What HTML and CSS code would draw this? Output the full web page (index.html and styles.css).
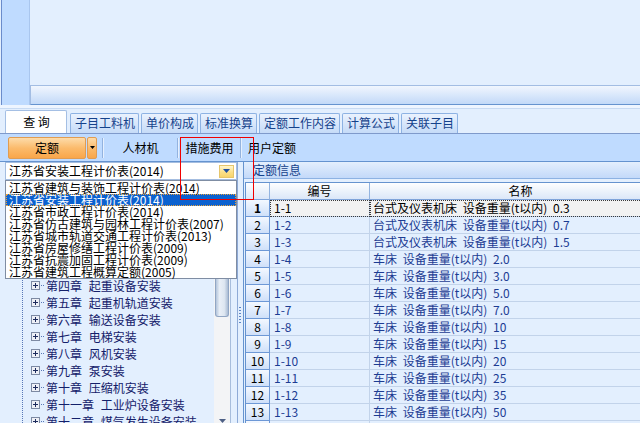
FILE: index.html
```html
<!DOCTYPE html>
<html lang="zh-CN">
<head>
<meta charset="utf-8">
<title>定额查询</title>
<link rel="stylesheet" href="styles.css">
</head>
<body>
<div class="app">
  <div class="top">
    <div class="strip"></div>
    <div class="top-main">
      <div class="canvas"></div>
      <div class="bar"></div>
    </div>
  </div>

  <div class="tabs">
    <div class="tab active">查 询</div>
    <div class="tab">子目工料机</div>
    <div class="tab">单价构成</div>
    <div class="tab">标准换算</div>
    <div class="tab">定额工作内容</div>
    <div class="tab">计算公式</div>
    <div class="tab">关联子目</div>
  </div>

  <div class="toolbar">
    <div class="split-btn">
      <div class="btn-main">定额</div>
      <div class="btn-arrow"><svg width="5" height="3" viewBox="0 0 5 3"><path d="M0 0h5L2.5 3z" fill="#000"/></svg></div>
    </div>
    <div class="sep"></div>
    <div class="tb-item w73">人材机</div>
    <div class="sep"></div>
    <div class="tb-item w61">措施费用</div>
    <div class="sep"></div>
    <div class="tb-item w60">用户定额</div>
  </div>

  <div class="main">
    <div class="left">
      <div class="combo">
        <span class="combo-text">江苏省安装工程计价表(2014)</span>
        <span class="combo-btn"><svg width="7" height="4" viewBox="0 0 7 4"><path d="M0 0h7L3.5 4z" fill="#1f4f9f"/></svg></span>
      </div>
      <div class="tree">
        <div class="tree-body">
          <div class="node l0"><span class="txt">江苏省安装工程计价表(2014)</span></div>
          <div class="node l1"><span class="txt">第一册 机械设备安装工程</span></div>
          <div class="node"><span class="exp"><svg width="9" height="9" viewBox="0 0 9 9"><rect x="0.5" y="0.5" width="8" height="8" fill="#eef0f6" stroke="#7d8aa3"/><path d="M2 4.5h5M4.5 2v5" stroke="#1d2b5c"/></svg></span><span class="conn"></span><span class="txt">第一章 切削设备安装</span></div>
          <div class="node"><span class="exp"><svg width="9" height="9" viewBox="0 0 9 9"><rect x="0.5" y="0.5" width="8" height="8" fill="#eef0f6" stroke="#7d8aa3"/><path d="M2 4.5h5M4.5 2v5" stroke="#1d2b5c"/></svg></span><span class="conn"></span><span class="txt">第二章 锻压设备安装</span></div>
          <div class="node"><span class="exp"><svg width="9" height="9" viewBox="0 0 9 9"><rect x="0.5" y="0.5" width="8" height="8" fill="#eef0f6" stroke="#7d8aa3"/><path d="M2 4.5h5M4.5 2v5" stroke="#1d2b5c"/></svg></span><span class="conn"></span><span class="txt">第三章 铸造设备安装</span></div>
          <div class="node"><span class="exp"><svg width="9" height="9" viewBox="0 0 9 9"><rect x="0.5" y="0.5" width="8" height="8" fill="#eef0f6" stroke="#7d8aa3"/><path d="M2 4.5h5M4.5 2v5" stroke="#1d2b5c"/></svg></span><span class="conn"></span><span class="txt">第四章 起重设备安装</span></div>
          <div class="node"><span class="exp"><svg width="9" height="9" viewBox="0 0 9 9"><rect x="0.5" y="0.5" width="8" height="8" fill="#eef0f6" stroke="#7d8aa3"/><path d="M2 4.5h5M4.5 2v5" stroke="#1d2b5c"/></svg></span><span class="conn"></span><span class="txt">第五章 起重机轨道安装</span></div>
          <div class="node"><span class="exp"><svg width="9" height="9" viewBox="0 0 9 9"><rect x="0.5" y="0.5" width="8" height="8" fill="#eef0f6" stroke="#7d8aa3"/><path d="M2 4.5h5M4.5 2v5" stroke="#1d2b5c"/></svg></span><span class="conn"></span><span class="txt">第六章 输送设备安装</span></div>
          <div class="node"><span class="exp"><svg width="9" height="9" viewBox="0 0 9 9"><rect x="0.5" y="0.5" width="8" height="8" fill="#eef0f6" stroke="#7d8aa3"/><path d="M2 4.5h5M4.5 2v5" stroke="#1d2b5c"/></svg></span><span class="conn"></span><span class="txt">第七章 电梯安装</span></div>
          <div class="node"><span class="exp"><svg width="9" height="9" viewBox="0 0 9 9"><rect x="0.5" y="0.5" width="8" height="8" fill="#eef0f6" stroke="#7d8aa3"/><path d="M2 4.5h5M4.5 2v5" stroke="#1d2b5c"/></svg></span><span class="conn"></span><span class="txt">第八章 风机安装</span></div>
          <div class="node"><span class="exp"><svg width="9" height="9" viewBox="0 0 9 9"><rect x="0.5" y="0.5" width="8" height="8" fill="#eef0f6" stroke="#7d8aa3"/><path d="M2 4.5h5M4.5 2v5" stroke="#1d2b5c"/></svg></span><span class="conn"></span><span class="txt">第九章 泵安装</span></div>
          <div class="node"><span class="exp"><svg width="9" height="9" viewBox="0 0 9 9"><rect x="0.5" y="0.5" width="8" height="8" fill="#eef0f6" stroke="#7d8aa3"/><path d="M2 4.5h5M4.5 2v5" stroke="#1d2b5c"/></svg></span><span class="conn"></span><span class="txt">第十章 压缩机安装</span></div>
          <div class="node"><span class="exp"><svg width="9" height="9" viewBox="0 0 9 9"><rect x="0.5" y="0.5" width="8" height="8" fill="#eef0f6" stroke="#7d8aa3"/><path d="M2 4.5h5M4.5 2v5" stroke="#1d2b5c"/></svg></span><span class="conn"></span><span class="txt">第十一章 工业炉设备安装</span></div>
          <div class="node"><span class="exp"><svg width="9" height="9" viewBox="0 0 9 9"><rect x="0.5" y="0.5" width="8" height="8" fill="#eef0f6" stroke="#7d8aa3"/><path d="M2 4.5h5M4.5 2v5" stroke="#1d2b5c"/></svg></span><span class="conn"></span><span class="txt">第十二章 煤气发生设备安装</span></div>
        </div>
        <div class="vscroll">
          <div class="thumb"></div>
          <div class="track"></div>
          <div class="arrow-down"><svg width="7" height="4" viewBox="0 0 7 4"><path d="M0 0h7L3.5 4z" fill="#4d5f85"/></svg></div>
        </div>
      </div>
      <ul class="droplist">
        <li>江苏省建筑与装饰工程计价表(2014)</li>
        <li class="sel">江苏省安装工程计价表(2014)</li>
        <li>江苏省市政工程计价表(2014)</li>
        <li>江苏省仿古建筑与园林工程计价表(2007)</li>
        <li>江苏省城市轨道交通工程计价表(2013)</li>
        <li>江苏省房屋修缮工程计价表(2009)</li>
        <li>江苏省抗震加固工程计价表(2009)</li>
        <li>江苏省建筑工程概算定额(2005)</li>
      </ul>
    </div>

    <div class="splitter"><div class="dots"></div></div>

    <div class="right">
      <div class="panel-head">定额信息</div>
      <div class="grid">
        <div class="row head"><div class="hd rhh"></div><div class="hd">编号</div><div class="hd">名称</div></div>
        <div class="row cur"><div class="rh b">1</div><div class="c">1-1</div><div class="c n">台式及仪表机床 设备重量(t以内) 0.3</div></div>
        <div class="row"><div class="rh">2</div><div class="c">1-2</div><div class="c n">台式及仪表机床 设备重量(t以内) 0.7</div></div>
        <div class="row"><div class="rh">3</div><div class="c">1-3</div><div class="c n">台式及仪表机床 设备重量(t以内) 1.5</div></div>
        <div class="row"><div class="rh">4</div><div class="c">1-4</div><div class="c n">车床 设备重量(t以内) 2.0</div></div>
        <div class="row"><div class="rh">5</div><div class="c">1-5</div><div class="c n">车床 设备重量(t以内) 3.0</div></div>
        <div class="row"><div class="rh">6</div><div class="c">1-6</div><div class="c n">车床 设备重量(t以内) 5.0</div></div>
        <div class="row"><div class="rh">7</div><div class="c">1-7</div><div class="c n">车床 设备重量(t以内) 7.0</div></div>
        <div class="row"><div class="rh">8</div><div class="c">1-8</div><div class="c n">车床 设备重量(t以内) 10</div></div>
        <div class="row"><div class="rh">9</div><div class="c">1-9</div><div class="c n">车床 设备重量(t以内) 15</div></div>
        <div class="row"><div class="rh">10</div><div class="c">1-10</div><div class="c n">车床 设备重量(t以内) 20</div></div>
        <div class="row"><div class="rh">11</div><div class="c">1-11</div><div class="c n">车床 设备重量(t以内) 25</div></div>
        <div class="row"><div class="rh">12</div><div class="c">1-12</div><div class="c n">车床 设备重量(t以内) 35</div></div>
        <div class="row"><div class="rh">13</div><div class="c">1-13</div><div class="c n">车床 设备重量(t以内) 50</div></div>
        <div class="row"><div class="rh">14</div><div class="c">1-14</div><div class="c n">车床 设备重量(t以内) 70</div></div>
      </div>
    </div>
  </div>

  <div class="annot"></div>
</div>
</body>
</html>
```

FILE: styles.css
```css
* { box-sizing: border-box; margin: 0; padding: 0; }
html, body { width: 640px; height: 423px; overflow: hidden; }
body {
  font-family: "Noto Sans CJK SC", "Noto Sans", sans-serif;
  font-size: 12px;
  color: #000;
  background: #e3effe;
}
.app {
  position: relative;
  width: 640px;
  height: 423px;
  display: flex;
  flex-direction: column;
  overflow: hidden;
}

/* top area */
.top { display: flex; height: 105px; flex: none; }
.strip {
  width: 29px;
  margin-left: 1px;
  border-left: 1px solid #6b8ccb;
  border-right: 1px solid #a9c6ee;
  background: #bfdbff;
}
.top-main { flex: 1; display: flex; flex-direction: column; }
.canvas { height: 85px; background: #e3effe; }
.bar {
  height: 20px;
  border-top: 1px solid #a3bde3;
  border-left: 1px solid #a3bde3;
  border-bottom: 1px solid #6593cf;
  background: linear-gradient(#f1f6fe, #c2d9f8);
}

/* tabs */
.tabs {
  height: 29px;
  flex: none;
  display: flex;
  align-items: flex-end;
  gap: 2px;
  padding-left: 5px;
  border-bottom: 1px solid #7f9acb;
  background: linear-gradient(#eef5ff 0 3px, #c7daf3 3px 4px, #e3effe 4px);
}
.tab {
  height: 20px;
  line-height: 18px;
  padding: 0 3px 0 4px;
  border: 1px solid #8db2e3;
  border-bottom: none;
  border-radius: 2px 2px 0 0;
  background: linear-gradient(#eaf2fe, #c5dbf8);
  color: #15428b;
  white-space: nowrap;
}
.tab.active {
  height: 23px;
  width: 62px;
  margin-right: 1px;
  line-height: 22px;
  text-align: center;
  background: #fff;
  color: #000;
  border-color: #a4bfe4;
}

/* toolbar */
.toolbar {
  height: 28px;
  flex: none;
  display: flex;
  align-items: center;
  padding-left: 8px;
  background: #bfdbff;
  border-bottom: 1px solid #6593cf;
}
.split-btn { display: flex; gap: 1px; height: 22px; margin-right: 5px; }
.btn-main, .btn-arrow {
  border: 1px solid #e09c52;
  border-radius: 2px;
  background: linear-gradient(#fddcaa, #fbbb6c 50%, #f9a64a);
}
.btn-main { width: 78px; text-align: center; line-height: 20px; }
.btn-arrow { width: 10px; display: flex; align-items: center; justify-content: center; }
.sep {
  width: 2px;
  height: 20px;
  border-left: 1px solid #93b3df;
  border-right: 1px solid #e6f0fe;
}
.tb-item { text-align: center; line-height: 20px; }
.w73 { width: 73px; }
.w61 { width: 61px; }
.w60 { width: 60px; }

/* main */
.main { flex: 1; display: flex; min-height: 0; }
.left {
  position: relative;
  width: 238px;
  flex: none;
  display: flex;
  flex-direction: column;
  padding-left: 5px;
  border-right: 1px solid #8eaad6;
}
.combo {
  height: 18px;
  flex: none;
  display: flex;
  align-items: center;
  padding-left: 3px;
  background: #fff;
  border: 1px solid #a4bde0;
}
.combo-text { flex: 1; white-space: nowrap; line-height: 16px; }
.combo-btn {
  width: 15px;
  height: 13px;
  margin-right: 2px;
  display: flex;
  align-items: center;
  justify-content: center;
  border: 1px solid #e6c66c;
  background: linear-gradient(#fff6cf, #fbe08a 55%, #f8d46c);
}

.tree { flex: 1; display: flex; min-height: 0; background: #e3effe; }
.tree-body {
  flex: 1;
  overflow: hidden;
  padding-top: 12px;
  background-image: repeating-linear-gradient(to bottom, #5877b6 0 1px, transparent 1px 2px);
  background-size: 1px 100%;
  background-position: 17px 0;
  background-repeat: no-repeat;
  color: #13206a;
  word-spacing: 4px;
}
.node {
  height: 17px;
  display: flex;
  align-items: center;
  padding-left: 26px;
  white-space: nowrap;
}
.node.l0 { padding-left: 4px; }
.node.l1 { padding-left: 15px; }
.exp { width: 9px; height: 9px; display: flex; margin-right: 1px; }
.conn {
  width: 4px;
  height: 1px;
  margin-right: 1px;
  background: repeating-linear-gradient(to right, #5877b6 0 1px, transparent 1px 2px);
}
.txt { line-height: 17px; }

.vscroll {
  width: 17px;
  flex: none;
  margin-right: 6px;
  display: flex;
  flex-direction: column;
  background: #f3f4f6;
  border-right: 1px solid #a7bddc;
}
.thumb {
  height: 137px;
  flex: none;
  margin: 0 1px;
  border: 1px solid #91a6c4;
  border-top: none;
  border-radius: 0 0 3px 3px;
  background: linear-gradient(to right, #b3c5dc, #e9eff7 30%, #dde6f1 70%, #a9bbd3);
}
.track { flex: 1; }
.arrow-down { height: 10px; flex: none; display: flex; justify-content: center; padding-top: 6px; }

.droplist {
  position: absolute;
  left: 5px;
  top: 18px;
  width: 232px;
  height: 99px;
  padding-top: 1px;
  list-style: none;
  background: #fff;
  border: 1px solid #7f8da3;
}
.droplist li {
  height: 12px;
  line-height: 12px;
  padding-left: 3px;
  white-space: nowrap;
}
.droplist li.sel {
  background: #0b61cf;
  color: #fff;
  outline: 1px dotted #e9a23c;
  outline-offset: -1px;
}

.splitter { width: 5px; flex: none; padding-top: 145px; }
.dots {
  width: 2px;
  height: 16px;
  margin-left: 1px;
  background: repeating-linear-gradient(to bottom, #5b84c4 0 1px, transparent 1px 3px);
}

.right {
  flex: 1;
  min-width: 0;
  display: flex;
  flex-direction: column;
  border-left: 1px solid #6593cf;
  overflow: hidden;
}
.panel-head {
  height: 17px;
  flex: none;
  line-height: 16px;
  padding-left: 9px;
  color: #15428b;
  border-bottom: 1px solid #8db2e3;
  background: linear-gradient(#e4effd, #c3d9f9);
}
.grid {
  margin: 3px 0 0 1px;
  width: 427px;
  border-top: 1px solid #6593cf;
  border-left: 1px solid #6593cf;
}
.row {
  display: grid;
  grid-template-columns: 24px 100px 302px;
  height: 17px;
}
.hd {
  text-align: center;
  line-height: 16px;
  border-right: 1px solid #93b4e0;
  border-bottom: 1px solid #7fa4da;
  background: linear-gradient(#fdfeff, #dbe7f8);
}
.rh {
  text-align: center;
  line-height: 16px;
  border-right: 1px solid #6d98d6;
  border-bottom: 1px solid #6d98d6;
  background: linear-gradient(#f3f8ff, #cfe0f9);
}
.rh.b { font-weight: bold; }
.c {
  line-height: 16px;
  padding-left: 4px;
  white-space: nowrap;
  overflow: hidden;
  color: #1c3c93;
  background: #e3effe;
  border-right: 1px solid #c2d3ea;
  border-bottom: 1px solid #c2d3ea;
}
.c.n { padding-left: 3px; word-spacing: 3px; }
.row.cur .c {
  background: #f2f2f2;
  color: #000;
  outline: 1px dotted #3a3a3a;
  outline-offset: -1px;
}

.annot {
  position: absolute;
  left: 180px;
  top: 137px;
  width: 74px;
  height: 63px;
  border: 1px solid #f00000;
  pointer-events: none;
}
```
